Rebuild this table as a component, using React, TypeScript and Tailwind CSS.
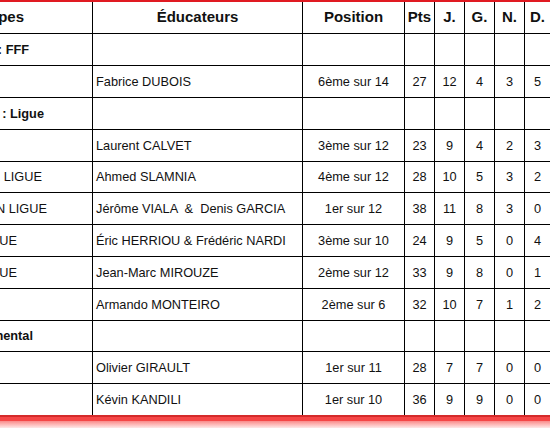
import React from "react";

type Row =
  | { kind: "section"; label: string; h: string }
  | { kind: "data"; label: string; labelPr: string; name: string; pos: string; n: string[]; h: string };

const rows: Row[] = [
  { kind: "section", label: "Niveau : FFF", h: "h-[32px]" },
  { kind: "data", label: "", labelPr: "pr-0", name: "Fabrice DUBOIS", pos: "6ème sur 14", n: ["27", "12", "4", "3", "5"], h: "h-[32px]" },
  { kind: "section", label: "Niveau : Ligue", h: "h-[32px]" },
  { kind: "data", label: "", labelPr: "pr-0", name: "Laurent CALVET", pos: "3ème sur 12", n: ["23", "9", "4", "2", "3"], h: "h-[32px]" },
  { kind: "data", label: "U17 R1 LIGUE", labelPr: "pr-[50px]", name: "Ahmed SLAMNIA", pos: "4ème sur 12", n: ["28", "10", "5", "3", "2"], h: "h-[31px]" },
  { kind: "data", label: "U15 R1 EN LIGUE", labelPr: "pr-[45px]", name: "Jérôme VIALA  &  Denis GARCIA", pos: "1er sur 12", n: ["38", "11", "8", "3", "0"], h: "h-[32px]" },
  { kind: "data", label: "U19 LIGUE", labelPr: "pr-[75px]", name: "Éric HERRIOU & Frédéric NARDI", pos: "3ème sur 10", n: ["24", "9", "5", "0", "4"], h: "h-[32px]" },
  { kind: "data", label: "U16 LIGUE", labelPr: "pr-[75px]", name: "Jean-Marc MIROUZE", pos: "2ème sur 12", n: ["33", "9", "8", "0", "1"], h: "h-[32px]" },
  { kind: "data", label: "", labelPr: "pr-0", name: "Armando MONTEIRO", pos: "2ème sur 6", n: ["32", "10", "7", "1", "2"], h: "h-[32px]" },
  { kind: "section", label: "Niveau : Départemental", h: "h-[31px]" },
  { kind: "data", label: "", labelPr: "pr-0", name: "Olivier GIRAULT", pos: "1er sur 11", n: ["28", "7", "7", "0", "0"], h: "h-[32px]" },
  { kind: "data", label: "", labelPr: "pr-0", name: "Kévin KANDILI", pos: "1er sur 10", n: ["36", "9", "9", "0", "0"], h: "h-[31px]" },
];

const sectionPr: Record<string, string> = {
  "Niveau : FFF": "pr-[63px]",
  "Niveau : Ligue": "pr-[48px]",
  "Niveau : Départemental": "pr-[59px]",
};

const numW = ["w-[30px] border-r", "w-[30px] border-r", "w-[30px] border-r", "w-[30px] border-r", "w-[25px]"];

export default function App() {
  return (
    <div
      className="w-[550px] h-[428px] overflow-hidden bg-white text-[#111]"
      style={{ fontFamily: '"Liberation Sans", Arial, sans-serif' }}
    >
      <div className="h-[2px] bg-[#e01a22]" />
      {/* header */}
      <div className="flex h-[32px] border-b border-black text-[15px] font-bold">
        <div className="w-[93px] border-r border-black flex items-center justify-end pr-[68px] overflow-hidden whitespace-nowrap">
          Équipes
        </div>
        <div className="w-[210px] border-r border-black flex items-center justify-center">Éducateurs</div>
        <div className="w-[102px] border-r border-black flex items-center justify-center">Position</div>
        <div className="w-[30px] border-r border-black flex items-center justify-center">Pts</div>
        <div className="w-[30px] border-r border-black flex items-center justify-center">J.</div>
        <div className="w-[30px] border-r border-black flex items-center justify-center">G.</div>
        <div className="w-[30px] border-r border-black flex items-center justify-center">N.</div>
        <div className="w-[25px] flex items-center justify-center">D.</div>
      </div>
      {rows.map((r, i) => {
        const last = i === rows.length - 1;
        return (
          <div
            key={i}
            className={`flex ${r.h} ${last ? "" : "border-b border-black"} text-[12.75px]`}
          >
            {r.kind === "section" ? (
              <div
                className={`w-[93px] border-r border-black flex items-center justify-end overflow-hidden whitespace-nowrap font-bold ${sectionPr[r.label]}`}
              >
                {r.label}
              </div>
            ) : (
              <div
                className={`w-[93px] border-r border-black flex items-center justify-end overflow-hidden whitespace-nowrap ${r.labelPr}`}
              >
                {r.label}
              </div>
            )}
            <div className="w-[210px] border-r border-black flex items-center pl-[3px] whitespace-pre">
              {r.kind === "data" ? r.name : ""}
            </div>
            <div className="w-[102px] border-r border-black flex items-center justify-center">
              {r.kind === "data" ? r.pos : ""}
            </div>
            {numW.map((w, j) => (
              <div key={j} className={`${w} border-black flex items-center justify-center`}>
                {r.kind === "data" ? r.n[j] : ""}
              </div>
            ))}
          </div>
        );
      })}
      <div className="h-[2px] bg-[#d42a2a]" />
      <div className="h-[4px] bg-[#f54646]" />
      <div className="h-[7px] bg-gradient-to-b from-[#f88a8a] to-[#fde8e8]" />
    </div>
  );
}
